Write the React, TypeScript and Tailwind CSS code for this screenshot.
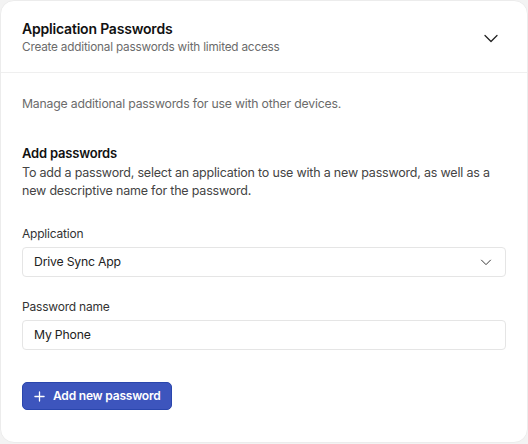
import React from "react";

function Chevron({ className }: { className?: string }) {
  return (
    <svg viewBox="0 0 16 16" className={className} fill="none" stroke="currentColor" strokeWidth={1.3} strokeLinecap="round" strokeLinejoin="round">
      <path d="M2 5.5l6 6 6-6" />
    </svg>
  );
}

export default function App() {
  return (
    <div className="min-h-[444px] w-[528px] bg-[#f3f3f3] font-['Inter',sans-serif] tracking-[-0.2px] text-[#1d1d1f]">
      <div className="rounded-[14px] border border-[#ececec] bg-white">
        <div className="flex items-center justify-between border-b border-[#efefef] pl-[21px] pr-[28px] pt-[19px] pb-[17px]">
          <div className="flex flex-col">
            <div className="text-[14px] font-semibold leading-[18px] text-[#111]">Application Passwords</div>
            <div className="mt-[1px] text-[11.75px] leading-[16px] text-[#6b6b6b]">Create additional passwords with limited access</div>
          </div>
          <Chevron className="h-[16px] w-[16px] text-[#222]" />
        </div>
        <div className="px-[21px] pt-[22px] pb-[32px]">
          <p className="text-[12.25px] leading-[18px] text-[#6b6b6b]">Manage additional passwords for use with other devices.</p>
          <div className="mt-[31px] text-[13px] font-semibold leading-[18px] text-[#111]">Add passwords</div>
          <p className="mt-[2px] text-[12.5px] leading-[18px] text-[#444]">
            To add a password, select an application to use with a new password, as well as a new descriptive name for the password.
          </p>
          <div className="mt-[26px] text-[12px] leading-[16px] text-[#333]">Application</div>
          <div className="mt-[5px] flex h-[30px] items-center justify-between rounded-[4px] border border-[#e5e5e5] pl-[11px] pr-[13px]">
            <span className="text-[12.25px] text-[#222]">Drive Sync App</span>
            <Chevron className="h-[12px] w-[12px] text-[#333]" />
          </div>
          <div className="mt-[22px] text-[12px] leading-[16px] text-[#333]">Password name</div>
          <div className="mt-[5px] flex h-[30px] items-center rounded-[4px] border border-[#e5e5e5] pl-[11px]">
            <span className="text-[12.25px] text-[#222]">My Phone</span>
          </div>
          <button className="mt-[32px] flex h-[28px] items-center gap-[8px] rounded-[5px] border border-[#2a46ad] bg-[#3d55bd] pl-[11px] pr-[10px] text-[12px] font-semibold text-white">
            <svg viewBox="0 0 12 12" className="h-[11px] w-[11px]" fill="none" stroke="currentColor" strokeWidth={1.4} strokeLinecap="round">
              <path d="M6 1v10M1 6h10" />
            </svg>
            Add new password
          </button>
        </div>
      </div>
    </div>
  );
}
